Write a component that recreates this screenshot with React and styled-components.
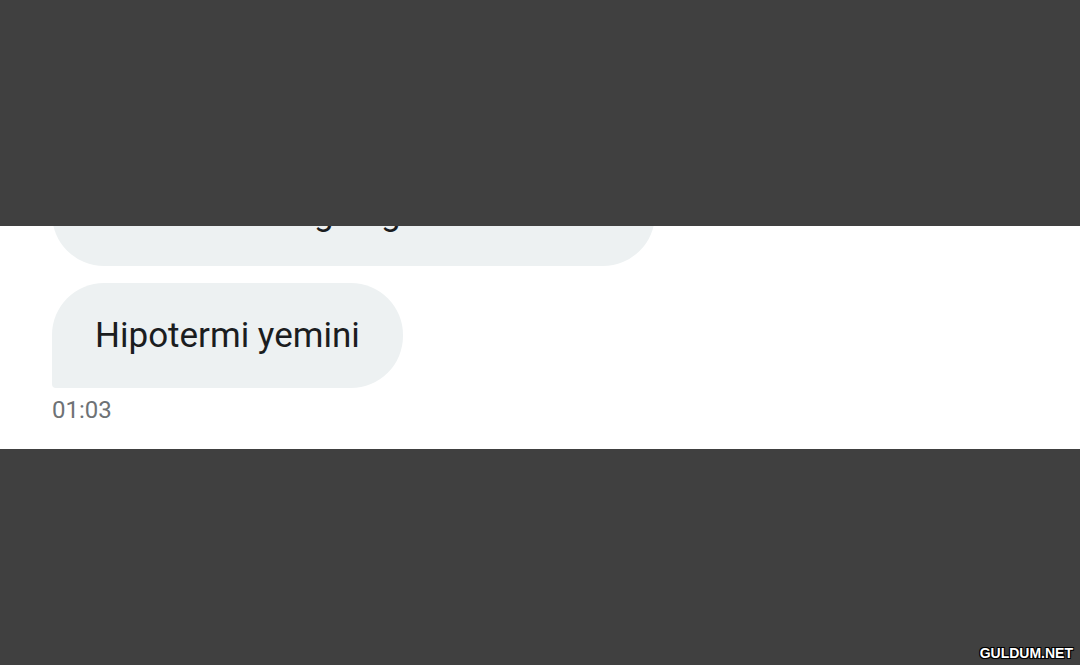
import React from 'react';
import styled, { createGlobalStyle } from 'styled-components';

const GlobalStyle = createGlobalStyle`
  html, body {
    margin: 0;
    padding: 0;
    background: #404040;
  }
  #root {
    height: 665px;
  }
`;

const Page = styled.div`
  display: flex;
  flex-direction: column;
  width: 1080px;
  height: 665px;
  background: #404040;
  font-family: Roboto, "Noto Sans", sans-serif;
`;

const Shade = styled.div`
  flex: ${props => props.grow ? 1 : 'none'};
  height: ${props => props.grow ? 'auto' : props.h + 'px'};
  background: #404040;
  display: flex;
  justify-content: flex-end;
  align-items: flex-end;
  padding: 0 7px 4px 0;
  box-sizing: border-box;
`;

const ChatPanel = styled.div`
  height: 223px;
  background: #ffffff;
  overflow: hidden;
  display: flex;
  flex-direction: column;
  align-items: flex-start;
  padding-left: 52px;
`;

const Bubble = styled.div`
  background: #edf1f2;
  color: #1b1d1f;
  font-size: 35px;
  line-height: 40px;
  padding: 33px 43px 32px 43px;
  white-space: nowrap;
  border-radius: ${props => props.last ? '52px 52px 52px 4px' : '52px'};
  margin-top: ${props => props.clipped ? '-65px' : '17px'};
`;

const Time = styled.div`
  margin-top: 9px;
  color: #6e7275;
  font-size: 24px;
  line-height: 26px;
`;

const Watermark = styled.div`
  color: #ffffff;
  font-family: "Liberation Sans", Arial, sans-serif;
  font-weight: 700;
  font-size: 14px;
  text-shadow: 0 0 2px #000, 1px 1px 0 #000, -1px -1px 0 #000, 1px -1px 0 #000, -1px 1px 0 #000;
`;

export default function App() {
  return (
    <Page>
      <GlobalStyle />
      <Shade h={226} />
      <ChatPanel>
        <Bubble clipped>Ben de sabah gün gibi hatırladım.</Bubble>
        <Bubble last>Hipotermi yemini</Bubble>
        <Time>01:03</Time>
      </ChatPanel>
      <Shade grow>
        <Watermark>GULDUM.NET</Watermark>
      </Shade>
    </Page>
  );
}
